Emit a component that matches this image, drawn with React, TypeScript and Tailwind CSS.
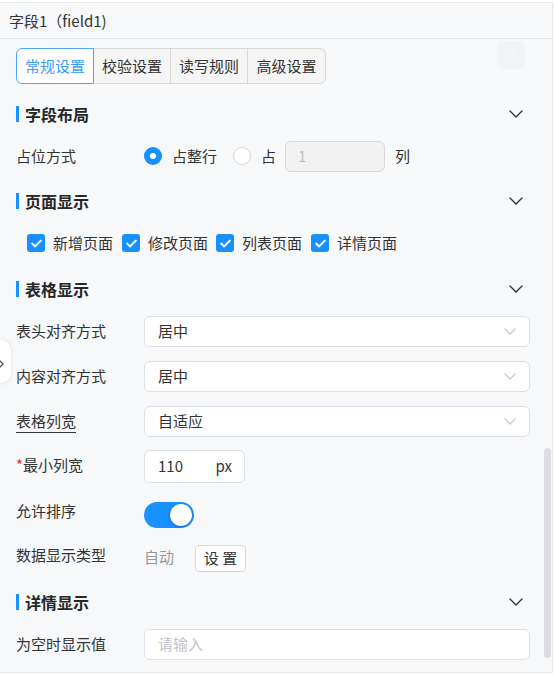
import type { ReactNode } from 'react';

const FONT = { fontFamily: '"Microsoft YaHei", "Noto Sans CJK SC", "Noto Sans", sans-serif' };

function Chevron({ className = '' }: { className?: string }) {
  return (
    <svg width="14" height="8" viewBox="0 0 14 8" fill="none" className={className}>
      <polyline points="1,1 7,7 13,1" stroke="currentColor" strokeWidth="1.4" strokeLinejoin="round" strokeLinecap="round" />
    </svg>
  );
}

function SectionHeader({ title }: { title: string }) {
  return (
    <div className="flex h-[40px] items-center justify-between">
      <div className="flex items-center">
        <span className="h-[16px] w-[3px] bg-[#1890ff]" />
        <span className="ml-[6px] text-[16px] font-bold text-[#262626]">{title}</span>
      </div>
      <Chevron className="mr-[7px] text-[#333]" />
    </div>
  );
}

function FormRow({ label, children, className = '' }: { label: ReactNode; children: ReactNode; className?: string }) {
  return (
    <div className={`flex items-start ${className}`}>
      <div className="w-[128px] shrink-0 text-[15px] leading-[30px] text-[#333]">{label}</div>
      <div className="flex-1">{children}</div>
    </div>
  );
}

function Select({ value }: { value: string }) {
  return (
    <div className="flex h-[31px] items-center justify-between rounded-md border border-[#dcdfe6] bg-white pl-[13px] pr-[13px] text-[15px] text-[#333]">
      <span>{value}</span>
      <Chevron className="h-[7px] w-[12px] text-[#c0c4cc]" />
    </div>
  );
}

function Checkbox({ label, className = '' }: { label: string; className?: string }) {
  return (
    <div className={`flex items-center ${className}`}>
      <span className="flex h-[18px] w-[18px] items-center justify-center rounded-[3px] bg-[#1890ff]">
        <svg width="11" height="9" viewBox="0 0 11 9" fill="none">
          <polyline points="1.2,4.6 4.2,7.4 9.8,1.6" stroke="white" strokeWidth="2" strokeLinecap="round" strokeLinejoin="round" />
        </svg>
      </span>
      <span className="ml-[8px] text-[15px] text-[#333]">{label}</span>
    </div>
  );
}

const tabs = ['常规设置', '校验设置', '读写规则', '高级设置'];

export default function App() {
  return (
    <div className="h-[675px] w-[554px] overflow-hidden bg-white pt-[2px]" style={FONT}>
      <div className="relative h-[671px] w-[553px] overflow-hidden border-r border-b border-t border-[#e8e8e8] bg-[#f7f8fa]">
        {/* title */}
        <div className="flex h-[36px] items-center border-b border-[#e8e9eb] pl-[9px] pt-[2px] text-[15px] text-[#333]">
          字段1（field1)
        </div>

        {/* faint swap button in the corner */}
        <div className="absolute left-[497px] top-[38px] flex h-[28px] w-[28px] items-center justify-center rounded-md bg-[#f2f3f5]">
          <svg width="16" height="16" viewBox="0 0 16 16" fill="none" stroke="#f6f7f8" strokeWidth="1.2">
            <path d="M3 11c3 0 3-6 10-6M10 3l3 2-3 2" />
          </svg>
        </div>

        <div className="pl-4 pr-[22px]">
          {/* tabs */}
          <div className="mt-[9px] flex h-[36px]">
            {tabs.map((t, i) => (
              <div
                key={t}
                className={
                  i === 0
                    ? 'flex w-[78px] items-center justify-center rounded-l-md border border-[#4da3ff] bg-white text-[15px] text-[#3d9bff]'
                    : i === tabs.length - 1
                      ? 'flex w-[78px] items-center justify-center rounded-r-md border border-l-0 border-[#d9d9d9] bg-[#f5f5f5] text-[15px] text-[#333]'
                      : 'flex w-[77px] items-center justify-center border border-l-0 border-[#d9d9d9] bg-[#f5f5f5] text-[15px] text-[#333]'
                }
              >
                {t}
              </div>
            ))}
          </div>

          <div className="mt-[10px]">
            <SectionHeader title="字段布局" />
          </div>

          {/* occupancy row */}
          <div className="mt-[6px] flex h-[32px] items-center text-[15px] text-[#333]">
            <div className="w-[128px] shrink-0">占位方式</div>
            <span className="flex h-[18px] w-[18px] items-center justify-center rounded-full bg-[#1890ff]">
              <span className="h-[6px] w-[6px] rounded-full bg-white" />
            </span>
            <span className="ml-[10px]">占整行</span>
            <span className="ml-[16px] h-[18px] w-[18px] rounded-full border border-[#d9d9d9] bg-white" />
            <span className="ml-[10px]">占</span>
            <div className="ml-[9px] flex h-[31px] w-[100px] items-center rounded-md border border-[#d9d9d9] bg-[#f2f2f2] pl-[12px] text-[#bfbfbf]">
              1
            </div>
            <span className="ml-[10px]">列</span>
          </div>

          <div className="mt-[9px]">
            <SectionHeader title="页面显示" />
          </div>

          <div className="mt-[6px] flex h-[32px] items-center pl-[11px]">
            <Checkbox label="新增页面" />
            <Checkbox label="修改页面" className="ml-[9px]" />
            <Checkbox label="列表页面" className="ml-[8px]" />
            <Checkbox label="详情页面" className="ml-[9px]" />
          </div>

          <div className="mt-[10px]">
            <SectionHeader title="表格显示" />
          </div>

          <FormRow label="表头对齐方式" className="mt-[7px]">
            <Select value="居中" />
          </FormRow>
          <FormRow label="内容对齐方式" className="mt-[14px]">
            <Select value="居中" />
          </FormRow>
          <FormRow label={<span className="underline underline-offset-[5px]">表格列宽</span>} className="mt-[14px]">
            <Select value="自适应" />
          </FormRow>
          <FormRow
            label={
              <span>
                <span className="text-[#f5222d]">*</span>最小列宽
              </span>
            }
            className="mt-[13px]"
          >
            <div className="flex h-[33px] w-[101px] items-center justify-between rounded-md border border-[#dcdfe6] bg-white pl-[13px] pr-[12px] text-[15px] text-[#333]">
              <span>110</span>
              <span>px</span>
            </div>
          </FormRow>
          <FormRow label="允许排序" className="mt-[13px]">
            <div className="mt-[6px] flex h-[26px] w-[50px] items-center justify-end rounded-full bg-[#1890ff] pr-[2px]">
              <span className="h-[22px] w-[22px] rounded-full bg-white shadow-[0_1px_3px_rgba(0,0,0,0.25)]" />
            </div>
          </FormRow>
          <FormRow label="数据显示类型" className="mt-[12px]">
            <div className="flex items-center">
              <span className="mt-[2px] text-[15px] leading-[30px] text-[#999]">自动</span>
              <div className="ml-[21px] mt-[5px] flex h-[27px] w-[51px] items-center justify-center rounded-[4px] border border-[#d9d9d9] bg-white text-[15px] text-[#333]">
                设 置
              </div>
            </div>
          </FormRow>

          <div className="mt-[10px]">
            <SectionHeader title="详情显示" />
          </div>

          <FormRow label="为空时显示值" className="mt-[7px]">
            <div className="flex h-[31px] items-center rounded-md border border-[#dcdfe6] bg-white pl-[13px] text-[15px] text-[#c0c4cc]">
              请输入
            </div>
          </FormRow>
        </div>

        {/* side collapse handle */}
        <div className="absolute left-0 top-[337px] flex h-[43px] w-[11px] items-center overflow-hidden rounded-r-[10px] bg-white shadow-[0_0_4px_rgba(0,0,0,0.12)]">
          <svg width="8" height="10" viewBox="0 0 8 10" fill="none" className="-ml-[3px] mt-[4px]">
            <polyline points="2,1 6,5 2,9" stroke="#555" strokeWidth="1.3" />
          </svg>
        </div>

        {/* scrollbar */}
        <div className="absolute left-[544px] top-[445px] h-[210px] w-[7px] rounded-full bg-[#dcdde1]" />
      </div>
    </div>
  );
}
